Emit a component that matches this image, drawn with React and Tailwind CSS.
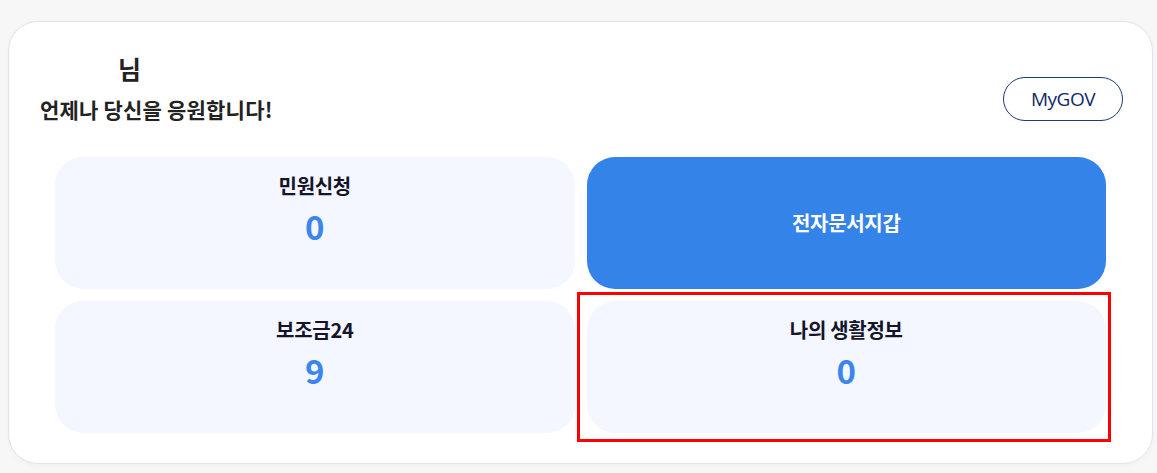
const font = { fontFamily: '"Noto Sans CJK KR", "Noto Sans", sans-serif' };

function Tile({ label, count, primary, children }) {
  if (primary) {
    return (
      <div className="h-[132px] rounded-[28px] bg-[#3483e8] flex items-center justify-center">
        <span className="text-[20px] font-bold text-white leading-[26px] tracking-[-0.3px]">{label}</span>
      </div>
    );
  }
  return (
    <div className="relative h-[132px] rounded-[28px] bg-[#f4f7ff] flex flex-col items-center pt-[16px] gap-[8px]">
      <span className="text-[20px] font-bold text-[#14142b] leading-[26px] tracking-[-0.3px]">{label}</span>
      <span className="text-[33px] font-bold text-[#3b85ee] leading-[38px]">{count}</span>
      {children}
    </div>
  );
}

export default function App() {
  return (
    <div className="min-h-screen bg-[#f7f7f8] pt-[21px] pl-[8px]" style={font}>
      <div className="w-[1145px] h-[443px] bg-white border border-[#e3e3eb] rounded-[30px] shadow-[0_2px_6px_rgba(0,0,0,0.03)]">
        {/* header */}
        <div className="flex items-end justify-between pl-[31px] pr-[29px] pt-[30px]">
          <div>
            <div className="pl-[78px] text-[25px] font-bold text-[#222] leading-[32px]">님</div>
            <div className="mt-[11px] text-[21px] font-semibold text-[#222] leading-[28px] tracking-[0.2px]">
              언제나 당신을 응원합니다!
            </div>
          </div>
          <button className="mb-[2px] w-[120px] h-[44px] rounded-full border border-[#1b3a78] text-[19px] text-[#0d2c66] leading-none tracking-[-0.5px]" style={{ fontFamily: '"Open Sans", "Noto Sans", sans-serif' }}>
            MyGOV
          </button>
        </div>

        {/* tiles */}
        <div className="grid grid-cols-2 gap-[12px] px-[46px] mt-[34px]">
          <Tile label="민원신청" count="0" />
          <Tile label="전자문서지갑" primary />
          <Tile label="보조금24" count="9" />
          <Tile label="나의 생활정보" count="0">
            <div className="absolute -left-[10px] -top-[9px] -right-[5px] -bottom-[9px] border-[3px] border-[#ff0000] pointer-events-none" />
          </Tile>
        </div>
      </div>
    </div>
  );
}
